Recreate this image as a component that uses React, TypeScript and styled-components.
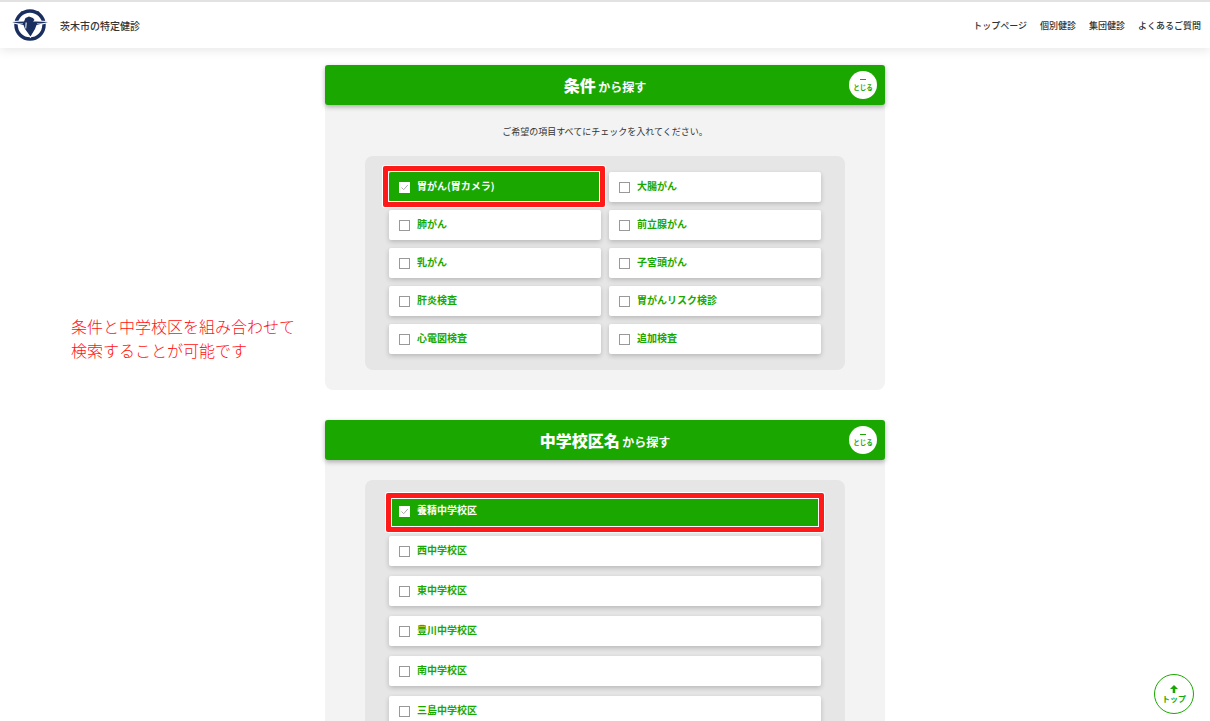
import React from "react";
import styled, { createGlobalStyle } from "styled-components";

const GlobalStyle = createGlobalStyle`
  html, body {
    margin: 0;
    padding: 0;
    height: 721px;
    overflow: hidden;
    background: #fff;
    font-family: "Noto Sans CJK JP", "Noto Sans", sans-serif;
    color: #333;
  }
`;

const GREEN = "#1aa800";

const Page = styled.div`
  position: relative;
  height: 721px;
  overflow: hidden;
`;

const Header = styled.header`
  height: 46px;
  border-top: 2px solid #e2e2e2;
  display: flex;
  align-items: center;
  justify-content: space-between;
  padding: 0 9px 0 12px;
  background: #fff;
  box-shadow: 0 2px 10px rgba(0, 0, 0, 0.1);
`;

const Brand = styled.div`
  display: flex;
  align-items: center;
  gap: 12px;
  font-size: 10px;
  font-weight: 500;
`;

const Nav = styled.nav`
  display: flex;
  gap: 13px;
  font-size: 9px;
  font-weight: 500;
`;

const Main = styled.main`
  display: flex;
  flex-direction: column;
  align-items: center;
  gap: 30px;
  padding-top: 17px;
`;

const Panel = styled.section`
  width: 560px;
  background: #f3f3f3;
  border-radius: 0 0 8px 8px;
`;

const PanelHead = styled.div`
  position: relative;
  height: 40px;
  line-height: 40px;
  text-align: center;
  background: ${GREEN};
  color: #fff;
  border-radius: 3px;
  box-shadow: 0 2px 5px rgba(0, 0, 0, 0.3);
  font-weight: 700;
  font-size: 12px;
  strong {
    font-size: 16px;
  }
`;

const CloseButton = styled.div`
  position: absolute;
  right: 8px;
  top: 6px;
  width: 28px;
  height: 28px;
  border-radius: 50%;
  background: #fff;
  color: ${GREEN};
  display: flex;
  flex-direction: column;
  align-items: center;
  justify-content: center;
  font-size: 6.5px;
  line-height: 8px;
  i {
    width: 6px;
    height: 1px;
    margin-bottom: 3px;
    background: ${GREEN};
  }
`;

const PanelBody = styled.div<{ $top: number }>`
  padding: ${(p) => p.$top}px 40px 20px;
`;

const HelpText = styled.p`
  margin: 0 0 17px;
  font-size: 9px;
  line-height: 14px;
  text-align: center;
`;

const OptionBox = styled.div<{ $columns: number; $gap: number }>`
  display: grid;
  grid-template-columns: repeat(${(p) => p.$columns}, 1fr);
  gap: ${(p) => p.$gap}px 8px;
  padding: 16px 24px;
  background: #e6e6e6;
  border-radius: 8px;
`;

const Option = styled.div<{ $checked?: boolean }>`
  position: relative;
  height: 30px;
  display: flex;
  align-items: center;
  gap: 7px;
  padding-left: 10px;
  border-radius: 2px;
  background: ${(p) => (p.$checked ? GREEN : "#fff")};
  color: ${(p) => (p.$checked ? "#fff" : GREEN)};
  box-shadow: 0 2px 5px rgba(0, 0, 0, 0.2);
  font-size: 10px;
  font-weight: 700;
`;

const OptionLabel = styled.span`
  margin-bottom: 4px;
`;

const Check = styled.span<{ $checked?: boolean }>`
  width: 11px;
  height: 11px;
  flex: none;
  display: flex;
  align-items: center;
  justify-content: center;
  box-sizing: border-box;
  background: #fff;
  border: 1px solid ${(p) => (p.$checked ? "#fff" : "#999")};
`;

const Highlight = styled.div<{ $top: number; $right: number; $bottom: number; $left: number }>`
  position: absolute;
  top: ${(p) => p.$top}px;
  right: ${(p) => p.$right}px;
  bottom: ${(p) => p.$bottom}px;
  left: ${(p) => p.$left}px;
  border: 5px solid #ff1a1a;
  box-shadow: 0 0 0 1px #fff, inset 0 0 0 1px #fff;
  border-radius: 2px;
`;

const Note = styled.p`
  position: absolute;
  left: 71px;
  top: 314px;
  margin: 0;
  font-size: 16px;
  font-weight: 300;
  line-height: 24px;
  color: #ff1111;
`;

const TopButton = styled.div`
  position: absolute;
  left: 1154px;
  top: 674px;
  width: 40px;
  height: 40px;
  box-sizing: border-box;
  border: 1px solid ${GREEN};
  border-radius: 50%;
  background: #fff;
  color: ${GREEN};
  display: flex;
  flex-direction: column;
  align-items: center;
  justify-content: center;
  gap: 1px;
  font-size: 8px;
  font-weight: 700;
  line-height: 10px;
`;

const BIRD =
  "M0 13 12 12.500 13.500 9 17 7.500 21 9 22.500 11 21 12.500 24 12.500 36 13 24.500 16 23 20 18.500 27.500 13 20 11.500 16z";

const Logo = () => (
  <svg width="36" height="32" viewBox="0 0 36 32">
    <circle cx="18" cy="16" r="14" fill="none" stroke="#1a2f5f" strokeWidth="3.5" />
    <path d="M7.500 6.500 9 2.500 12 2zM28.500 6.500 27 2.500 24 2z" fill="#1a2f5f" />
    <path d={BIRD} fill="#fff" stroke="#fff" strokeWidth="2" />
    <path d={BIRD} fill="#1a2f5f" />
    <path d="M13.600 13.500h1.100l-.5 6h-.9z" fill="#fff" />
    <path d="M3 14.500h8M25 14.500h8" stroke="#fff" strokeWidth="0.5" />
  </svg>
);

const CheckMark = () => (
  <svg width="9" height="9" viewBox="0 0 9 9" fill="none" stroke="#aaa" strokeWidth="1">
    <path d="M1.500 4.500 3.700 6.700 7.800 2" />
  </svg>
);

const conditions = [
  "胃がん(胃カメラ)", "大腸がん",
  "肺がん", "前立腺がん",
  "乳がん", "子宮頭がん",
  "肝炎検査", "胃がんリスク検診",
  "心電図検査", "追加検査",
];

const schools = ["養精中学校区", "西中学校区", "東中学校区", "豊川中学校区", "南中学校区", "三島中学校区"];

const App: React.FC = () => (
  <Page>
    <GlobalStyle />
    <Header>
      <Brand>
        <Logo />
        茨木市の特定健診
      </Brand>
      <Nav>
        <span>トップページ</span>
        <span>個別健診</span>
        <span>集団健診</span>
        <span>よくあるご質問</span>
      </Nav>
    </Header>
    <Main>
      <Panel>
        <PanelHead>
          <strong>条件</strong> から探す
          <CloseButton><i />とじる</CloseButton>
        </PanelHead>
        <PanelBody $top={20}>
          <HelpText>ご希望の項目すべてにチェックを入れてください。</HelpText>
          <OptionBox $columns={2} $gap={8}>
            {conditions.map((label, i) => (
              <Option key={label} $checked={i === 0}>
                <Check $checked={i === 0}>{i === 0 && <CheckMark />}</Check>
                <OptionLabel>{label}</OptionLabel>
                {i === 0 && <Highlight $top={-6} $right={-4} $bottom={-5} $left={-6} />}
              </Option>
            ))}
          </OptionBox>
        </PanelBody>
      </Panel>
      <Panel>
        <PanelHead>
          <strong>中学校区名</strong> から探す
          <CloseButton><i />とじる</CloseButton>
        </PanelHead>
        <PanelBody $top={20}>
          <OptionBox $columns={1} $gap={10}>
            {schools.map((label, i) => (
              <Option key={label} $checked={i === 0}>
                <Check $checked={i === 0}>{i === 0 && <CheckMark />}</Check>
                <OptionLabel>{label}</OptionLabel>
                {i === 0 && <Highlight $top={-3} $right={-3} $bottom={-6} $left={-3} />}
              </Option>
            ))}
          </OptionBox>
        </PanelBody>
      </Panel>
    </Main>
    <Note>
      条件と中学校区を組み合わせて
      <br />
      検索することが可能です
    </Note>
    <TopButton>
      <svg width="8" height="8" viewBox="0 0 8 8" fill={GREEN}>
        <path d="M4 0 8 4H5.300V8H2.700V4H0z" />
      </svg>
      トップ
    </TopButton>
  </Page>
);

export default App;
